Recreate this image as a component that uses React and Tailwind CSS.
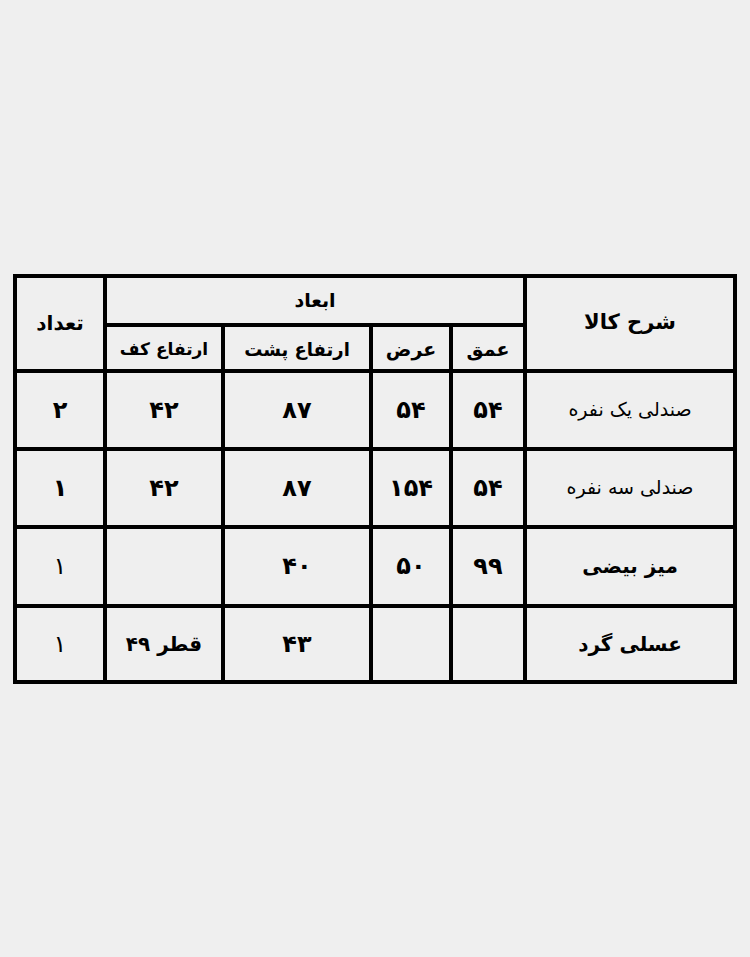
import React from 'react';

const rows = [
  { name: 'صندلی یک نفره', nameCls: 'text-[19px] font-normal', depth: '۵۴', width: '۵۴', back: '۸۷', seat: '۴۲', qty: '۲', qtyCls: 'font-bold' },
  { name: 'صندلی سه نفره', nameCls: 'text-[19px] font-normal', depth: '۵۴', width: '۱۵۴', back: '۸۷', seat: '۴۲', qty: '۱', qtyCls: 'font-bold' },
  { name: 'میز بیضی', nameCls: 'text-[20px] font-bold', depth: '۹۹', width: '۵۰', back: '۴۰', seat: '', qty: '۱', qtyCls: 'font-normal' },
  { name: 'عسلی گرد', nameCls: 'text-[20px] font-bold', depth: '', width: '', back: '۴۳', seat: 'قطر ۴۹', qty: '۱', qtyCls: 'font-normal' },
];

function Cell({ children, className = '' }) {
  return (
    <div className={`bg-[#efefef] flex items-center justify-center text-black ${className}`}>
      {children}
    </div>
  );
}

export default function App() {
  return (
    <div
      className="h-[957px] w-full bg-[#efefef] flex items-center justify-center"
      style={{ fontFamily: '"DejaVu Sans", sans-serif' }}
    >
      <div
        dir="rtl"
        className="grid bg-black p-[4px] gap-[4px] grid-cols-[206px_70px_76px_144px_114px_86px] grid-rows-[45px_42px_74px_74px_75px_72px]"
      >
        {/* header */}
        <Cell className="row-span-2 text-[21px] font-bold">شرح کالا</Cell>
        <Cell className="col-span-4 text-[19px] font-bold">ابعاد</Cell>
        <Cell className="row-span-2 text-[20px] font-bold">تعداد</Cell>
        <Cell className="text-[19px] font-bold pt-1">عمق</Cell>
        <Cell className="text-[19px] font-bold pt-1">عرض</Cell>
        <Cell className="text-[18px] font-bold pt-1">ارتفاع پشت</Cell>
        <Cell className="text-[17px] font-bold pt-1">ارتفاع کف</Cell>

        {rows.map((r, i) => (
          <React.Fragment key={i}>
            <Cell className={r.nameCls}>{r.name}</Cell>
            <Cell className="text-[24px] font-bold">{r.depth}</Cell>
            <Cell className="text-[24px] font-bold">{r.width}</Cell>
            <Cell className="text-[24px] font-bold">{r.back}</Cell>
            <Cell className={`font-bold ${r.seat.length > 3 ? 'text-[20px]' : 'text-[24px]'}`}>{r.seat}</Cell>
            <Cell className={`text-[24px] ${r.qtyCls}`}>{r.qty}</Cell>
          </React.Fragment>
        ))}
      </div>
    </div>
  );
}
